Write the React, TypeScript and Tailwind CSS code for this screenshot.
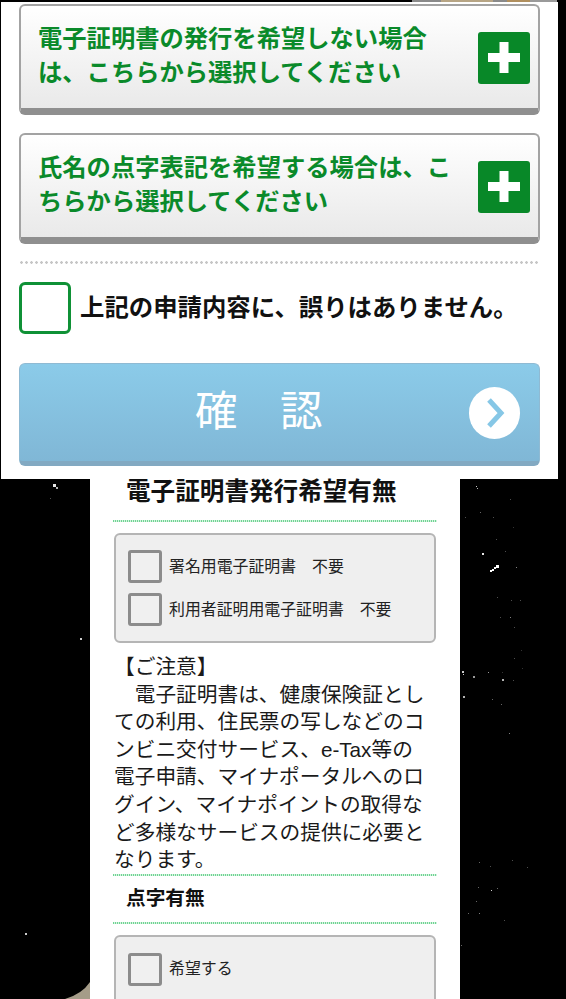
const FONT = "font-['Liberation_Sans','Noto_Sans_CJK_JP',sans-serif]";

// speckles of the wallpaper showing round the panels
const SPECKS: [number, number, number, number][] = [
  [53, 484, 3, 0.9], [56, 487, 2, 0.7], [50, 498, 1, 0.3], [80, 638, 2, 0.8], [25, 933, 2, 0.8],
  [476, 486, 1, 0.8], [477, 488, 1, 0.7], [465, 517, 1, 0.3], [480, 512, 1, 0.4],
  [493, 517, 1, 0.3], [510, 499, 1, 0.3], [513, 527, 1, 0.2], [496, 539, 1, 0.3],
  [482, 553, 2, 0.9], [516, 567, 1, 0.5], [490, 570, 2, 1], [492, 569, 2, 1], [494, 567, 2, 1],
  [496, 565, 3, 1], [505, 551, 1, 0.3], [511, 600, 1, 0.3], [497, 597, 1, 0.3], [500, 617, 1, 0.3],
  [520, 600, 1, 0.3], [514, 658, 1, 0.3], [510, 617, 1, 0.5], [514, 627, 1, 0.3], [521, 650, 1, 0.2],
  [513, 680, 1, 0.3], [502, 672, 1, 0.2], [522, 668, 1, 0.2], [462, 671, 2, 0.8], [463, 674, 1, 0.8],
  [473, 676, 2, 0.6], [488, 672, 1, 0.6], [502, 679, 2, 0.7], [463, 696, 2, 0.7],
  [492, 699, 1, 0.4], [501, 704, 1, 0.4], [509, 733, 1, 0.5], [479, 862, 1, 0.4],
  [490, 866, 1, 0.3], [512, 860, 1, 0.3], [527, 867, 1, 0.3], [478, 887, 1, 0.4],
  [497, 888, 1, 0.4], [491, 890, 1, 0.8], [476, 901, 1, 0.4], [468, 913, 1, 0.4],
  [479, 913, 1, 0.5], [504, 920, 1, 0.3], [461, 945, 1, 0.4],
];

function ExpandCard({ children }: { children: React.ReactNode }) {
  return (
    <div className="flex h-[111px] items-start justify-between rounded-[6px] border-2 border-b-[7px] border-[#a3a3a3] border-b-[#8f8f8f] bg-gradient-to-b from-white to-[#e9e9e9] pl-[17px] pr-[8px] pt-[16px]">
      <p className="w-[420px] text-[24.3px] font-bold leading-[34px] text-[#0a8a2a]">{children}</p>
      <div className="mt-[10px] flex h-[52px] w-[52px] shrink-0 items-center justify-center rounded-[3px] bg-[#088828]">
        <svg width="32" height="31" viewBox="0 0 32 31" aria-hidden>
          <path d="M11.500 0h9v11h11.500v9H20.500v11h-9V20H0v-9h11.500z" fill="#fff" />
        </svg>
      </div>
    </div>
  );
}

function OptionRow({ label }: { label: string }) {
  return (
    <div className="flex h-[33px] items-center gap-[7px]">
      <span className="h-[33px] w-[34px] shrink-0 rounded-[3px] border-[3px] border-[#8c8c8c] bg-[#f0f0f0]" />
      <span className="text-[15.9px] text-[#222]">{label}</span>
    </div>
  );
}

const GreenRule = () => (
  <div className="mx-[23px] h-[2px] bg-[repeating-linear-gradient(90deg,#6fd493_0_1px,#d6f3e0_1px_2px)]" />
);

export default function App() {
  return (
    <div className={`relative h-[999px] w-[566px] overflow-hidden bg-black ${FONT}`}>
      {SPECKS.map(([x, y, s, o], i) => (
        <span
          key={i}
          className="absolute bg-white"
          style={{ left: x, top: y, width: s, height: s, opacity: o }}
        />
      ))}
      {/* bit of the photo behind, bottom left */}
      <svg className="absolute left-[60px] top-[980px]" width="30" height="19" viewBox="0 0 30 19" aria-hidden>
        <path d="M5 19 Q22 14 30 2 V19 Z" fill="#a59c88" />
      </svg>

      {/* sliver of the page above, cut off by the top edge */}
      <div className="flex h-[2px] pl-[412px]">
        <span className="w-[29px] bg-[#8a8a8a]" />
        <span className="w-[52px] bg-[#b7a585]" />
        <span className="w-[14px] bg-[#8a8a8a]" />
        <span className="w-[23px] bg-[#b08f5e]" />
        <span className="w-[27px] bg-[#9a9a9a]" />
      </div>

      <section className="relative ml-[1px] w-[557px] bg-white px-[18px] pb-[13px] pt-[1.5px]">
        <ExpandCard>電子証明書の発行を希望しない場合は、こちらから選択してください</ExpandCard>
        <div className="mt-[18px]">
          <ExpandCard>氏名の点字表記を希望する場合は、こちらから選択してください</ExpandCard>
        </div>
        <div className="mt-[17.5px] h-[3px] bg-[radial-gradient(circle,#c6c6c6_1.2px,transparent_1.5px)] bg-[length:5px_3px]" />
        <div className="mt-[18px] flex items-center gap-[9px]">
          <span className="h-[52px] w-[52px] shrink-0 rounded-[6px] border-[3px] border-[#0f9136] bg-white" />
          <span className="text-[24.4px] font-bold leading-[44px] text-[#111]">上記の申請内容に、誤りはありません。</span>
        </div>
        <button className="relative mt-[29px] flex h-[103px] w-full items-center rounded-[6px] border border-b-[5px] border-[#8fbad3] border-b-[#82a9c2] bg-gradient-to-b from-[#8bcbe9] to-[#80b7d6] pl-[175px]">
          <span className="text-[42.5px] font-normal leading-none text-white">確　認</span>
          <span className="absolute right-[19px] top-[23px] flex h-[52px] w-[51px] items-center justify-center rounded-full bg-white">
            <svg width="24" height="32" viewBox="0 0 24 32" aria-hidden>
              <path d="M6 3 L18 16 L6 29" fill="none" stroke="#86c7e6" strokeWidth="5" />
            </svg>
          </span>
        </button>
      </section>

      <section className="relative ml-[90px] w-[370px] bg-white">
        <h2 className="pl-[36px] text-[24.6px] font-bold leading-[26px] text-[#111]">電子証明書発行希望有無</h2>
        <div className="mt-[15px]"><GreenRule /></div>
        <div className="mx-[24px] mt-[11px] flex h-[110px] flex-col justify-center gap-[10px] rounded-[6px] border-2 border-[#b5b5b5] bg-[#efefef] pl-[12px]">
          <OptionRow label="署名用電子証明書　不要" />
          <OptionRow label="利用者証明用電子証明書　不要" />
        </div>
        <div className="mt-[10px] whitespace-nowrap px-[24px] text-[20.7px] leading-[27.6px] text-[#1a1a1a]">
          <p>【ご注意】</p>
          <p className="indent-[20.7px]">
            電子証明書は、健康保険証とし<br />
            ての利用、住民票の写しなどのコ<br />
            ンビニ交付サービス、e-Tax等の<br />
            電子申請、マイナポータルへのロ<br />
            グイン、マイナポイントの取得な<br />
            ど多様なサービスの提供に必要と<br />
            なります。
          </p>
        </div>
        <GreenRule />
        <h3 className="mt-[8px] pl-[36px] text-[19.7px] font-bold leading-[28px] text-[#111]">点字有無</h3>
        <div className="mt-[10px]"><GreenRule /></div>
        <div className="mx-[24px] mt-[11px] h-[111px] rounded-[6px] border-2 border-[#b5b5b5] bg-[#efefef] pl-[12px] pt-[16px]">
          <OptionRow label="希望する" />
        </div>
      </section>
    </div>
  );
}
